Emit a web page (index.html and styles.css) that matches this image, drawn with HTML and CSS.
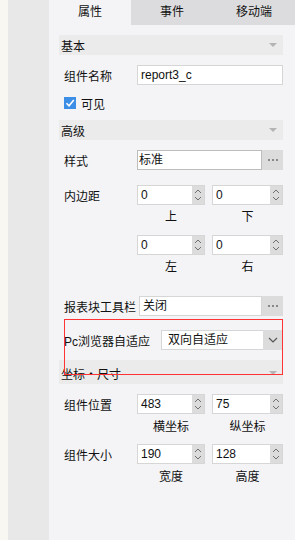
FILE: index.html
```html
<!DOCTYPE html>
<html lang="zh-CN">
<head>
    <meta charset="UTF-8">
    <meta name="viewport" content="width=device-width, initial-scale=1.0">
    <title>属性面板</title>
    <link rel="stylesheet" href="styles.css">
</head>
<body>
    <div class="page">
        <div class="edge"></div>
        <div class="gutter"></div>

        <!-- Property panel -->
        <div class="panel">
            <div class="tabs">
                <div class="tab active">属性</div>
                <div class="tab">事件</div>
                <div class="tab">移动端</div>
            </div>

            <div class="content">
                <!-- Basic -->
                <div class="group-title">基本<span class="caret"></span></div>
                <div class="row row-name">
                    <span class="label">组件名称</span>
                    <div class="field">report3_c</div>
                </div>
                <div class="row row-check">
                    <span class="checkbox">
                        <svg width="12" height="12" viewBox="0 0 12 12"><path d="M2.5 6.2 L5 8.7 L9.8 3" fill="none" stroke="#fff" stroke-width="1.6"/></svg>
                    </span>
                    <span>可见</span>
                </div>

                <!-- Advanced -->
                <div class="group-title">高级<span class="caret"></span></div>
                <div class="row row-style">
                    <span class="label">样式</span>
                    <div class="field field-dark">标准</div>
                    <span class="more-btn"><i></i><i></i><i></i></span>
                </div>

                <div class="row row-pad">
                    <span class="label">内边距</span>
                    <div class="spin-grid">
                        <div class="spin"><span class="spin-value">0</span><span class="spin-arrows"></span></div>
                        <div class="spin"><span class="spin-value">0</span><span class="spin-arrows"></span></div>
                    </div>
                </div>
                <div class="caption-row"><span>上</span><span>下</span></div>
                <div class="row row-pad2">
                    <span class="label"></span>
                    <div class="spin-grid">
                        <div class="spin"><span class="spin-value">0</span><span class="spin-arrows"></span></div>
                        <div class="spin"><span class="spin-value">0</span><span class="spin-arrows"></span></div>
                    </div>
                </div>
                <div class="caption-row"><span>左</span><span>右</span></div>

                <div class="row row-toolbar">
                    <span class="label label-auto">报表块工具栏</span>
                    <div class="field">关闭</div>
                    <span class="more-btn"><i></i><i></i><i></i></span>
                </div>

                <div class="row row-pc">
                    <span class="label label-pc">Pc浏览器自适应</span>
                    <div class="field select-field">双向自适应</div>
                    <span class="select-btn">
                        <svg width="10" height="6" viewBox="0 0 10 6"><path d="M1 1 L5 5 L9 1" fill="none" stroke="#555" stroke-width="1.2"/></svg>
                    </span>
                    <div class="highlight"></div>
                </div>

                <!-- Position / size -->
                <div class="group-title group-tall">坐标・尺寸<span class="caret"></span></div>
                <div class="row row-pos">
                    <span class="label">组件位置</span>
                    <div class="spin-grid">
                        <div class="spin"><span class="spin-value">483</span><span class="spin-arrows"></span></div>
                        <div class="spin"><span class="spin-value">75</span><span class="spin-arrows"></span></div>
                    </div>
                </div>
                <div class="caption-row caption-low"><span>横坐标</span><span>纵坐标</span></div>
                <div class="row row-size">
                    <span class="label">组件大小</span>
                    <div class="spin-grid">
                        <div class="spin"><span class="spin-value">190</span><span class="spin-arrows"></span></div>
                        <div class="spin"><span class="spin-value">128</span><span class="spin-arrows"></span></div>
                    </div>
                </div>
                <div class="caption-row caption-low"><span>宽度</span><span>高度</span></div>
            </div>
        </div>
    </div>
</body>
</html>
```

FILE: styles.css
```css
* {
    margin: 0;
    padding: 0;
    box-sizing: border-box;
}

body {
    font-family: "Liberation Sans", "Noto Sans CJK SC", sans-serif;
    font-size: 12px;
    color: #111;
    background-color: #f4f4f6;
}

.page {
    display: flex;
    width: 295px;
    height: 540px;
    overflow: hidden;
}

.edge {
    width: 8px;
    background-color: #f8f7f2;
}

.gutter {
    width: 41px;
    background-color: #e8e8e8;
}

.panel {
    flex: 1;
    background-color: #f4f4f6;
}

/* Tabs */
.tabs {
    display: flex;
    height: 25px;
}

.tab {
    flex: 1;
    text-align: center;
    line-height: 25px;
    font-size: 12px;
    background-color: #dcdcde;
    color: #111;
}

.tab.active {
    background-color: #f4f4f6;
}

.content {
    padding: 0 12px 0 10px;
}

/* Group header */
.group-title {
    display: flex;
    align-items: center;
    height: 20px;
    margin-top: 10px;
    padding-left: 2px;
    background-color: #ebebeb;
}

.group-tall {
    height: 24px;
    padding-top: 2px;
}

.caret {
    margin-left: auto;
    margin-right: 6px;
    border-left: 4px solid transparent;
    border-right: 4px solid transparent;
    border-top: 4px solid #b4b4b4;
}

/* Rows */
.row {
    display: flex;
    align-items: center;
    height: 20px;
    margin-top: 10px;
}

.label {
    width: 78px;
    padding-left: 5px;
    flex-shrink: 0;
    white-space: nowrap;
}

.label-auto {
    width: auto;
    margin-right: 3px;
}

.label-pc {
    width: 102px;
}

.field {
    flex: 1;
    height: 20px;
    line-height: 18px;
    padding-left: 3px;
    background-color: #fff;
    border: 1px solid #d6d6d6;
    white-space: nowrap;
}

.field-dark {
    border-color: #bdbdbd;
    padding-left: 1px;
}

.select-field {
    padding-left: 6px;
    border-right: none;
}

.more-btn {
    display: flex;
    align-items: center;
    justify-content: center;
    gap: 2px;
    width: 21px;
    height: 20px;
    background-color: #dcdcdc;
}

.more-btn i {
    width: 2px;
    height: 2px;
    background-color: #888;
}

.select-btn {
    display: flex;
    align-items: center;
    justify-content: center;
    width: 20px;
    height: 20px;
    background-color: #dcdcdc;
}

.row-check {
    margin-top: 8px;
    padding-left: 5px;
    gap: 5px;
}

.checkbox {
    display: flex;
    width: 12px;
    height: 12px;
    background-color: #3d8ee6;
}

.row-name + .row-check + .group-title {
    margin-top: 7px;
}

.row-pad {
    margin-top: 15px;
}

.row-pad2 {
    margin-top: 8px;
}

.row-toolbar {
    margin-top: 19px;
}

.row-pc {
    position: relative;
    margin-top: 14px;
}

.highlight {
    position: absolute;
    top: -11px;
    left: 5px;
    right: 0;
    height: 56px;
    border: 1px solid #f33;
    pointer-events: none;
}

/* Spinners */
.spin-grid {
    flex: 1;
    display: grid;
    grid-template-columns: 68px 1fr;
    gap: 7px;
}

.spin {
    display: flex;
    height: 20px;
    background-color: #fff;
    border: 1px solid #d6d6d6;
}

.spin-value {
    flex: 1;
    line-height: 18px;
    padding-left: 3px;
}

.spin-arrows {
    width: 12px;
    background-color: #dcdcdc;
    background-image:
        url("data:image/svg+xml,%3Csvg xmlns='http://www.w3.org/2000/svg' width='12' height='18' viewBox='0 0 12 18'%3E%3Cpath d='M3 7 L6 4 L9 7 M3 11 L6 14 L9 11' fill='none' stroke='%23707070' stroke-width='1'/%3E%3C/svg%3E");
    background-repeat: no-repeat;
}

.caption-row {
    display: grid;
    grid-template-columns: 68px 1fr;
    gap: 7px;
    margin-top: 2px;
    padding-left: 78px;
    height: 20px;
    line-height: 20px;
    text-align: center;
}

.caption-low {
    margin-top: 3px;
}

.row-size {
    margin-top: 7px;
}
```
